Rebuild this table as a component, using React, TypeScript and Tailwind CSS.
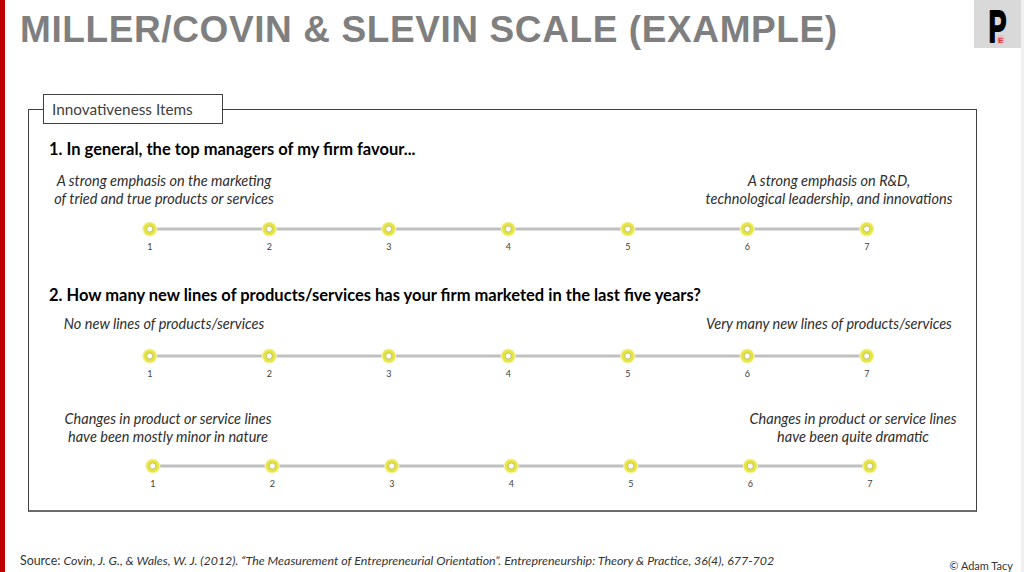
import React from "react";

const STEP = 119.5;

function Scale({ offset }: { offset: number }) {
  const w = STEP * 7;
  const centers = Array.from({ length: 7 }, (_, i) => STEP / 2 + i * STEP);
  return (
    <div className="flex flex-col" style={{ marginLeft: offset }}>
      <svg width={w} height={16} viewBox={`0 0 ${w} 16`} className="block">
        <line x1={centers[0]} y1={8} x2={centers[6]} y2={8} stroke="#c0c0c0" strokeWidth={3} />
        {centers.map((cx, i) => (
          <g key={i}>
            <circle cx={cx} cy={8} r={7.6} fill="#f5f3a8" />
            <circle cx={cx} cy={8} r={6.3} fill="#e6e440" />
            <circle cx={cx} cy={8} r={3.1} fill="#ffffff" stroke="#b5b35a" strokeWidth={0.8} />
          </g>
        ))}
      </svg>
      <div className="grid grid-cols-7 mt-[4px] text-center text-[9px] leading-[12px] text-[#404040]" style={{ width: w }}>
        {["1", "2", "3", "4", "5", "6", "7"].map((n) => (
          <span key={n}>{n}</span>
        ))}
      </div>
    </div>
  );
}

function Logo() {
  return (
    <div className="w-[47px] h-[48px] bg-[#d9d9d9]">
      <svg width={47} height={48} viewBox="0 0 47 48" className="block">
        <defs>
          <filter id="glow" x="-50%" y="-50%" width="200%" height="200%">
            <feGaussianBlur stdDeviation="1" />
          </filter>
        </defs>
        <text
          x={14.5}
          y={42}
          fontFamily="Liberation Sans, Arial, sans-serif"
          fontWeight={700}
          fontSize={45}
          textLength={18}
          lengthAdjust="spacingAndGlyphs"
          fill="#000000"
          stroke="#000000"
          strokeWidth={1.8}
          strokeLinejoin="round"
        >
          P
        </text>
        <circle cx={26.5} cy={39.5} r={3.5} fill="#f4a0a8" filter="url(#glow)" />
        <text
          x={24}
          y={43}
          fontFamily="Liberation Sans, Arial, sans-serif"
          fontWeight={700}
          fontSize={8}
          fill="#d63a48"
        >
          E
        </text>
      </svg>
    </div>
  );
}

export default function App() {
  return (
    <div className="w-[1024px] h-[572px] flex bg-white overflow-hidden font-['Lato',sans-serif]">
      <div className="w-[5px] h-full bg-[#c00000]" />
      <div className="flex-1 flex flex-col">
        <div className="flex items-start justify-between">
          <h1 className="pl-[15px] pt-[11px] font-['Liberation_Sans',Arial,sans-serif] font-bold text-[37px] leading-none tracking-[0.6px] text-[#7f7f7f]">
            MILLER/COVIN &amp; SLEVIN SCALE (EXAMPLE)
          </h1>
          <Logo />
        </div>

        <div className="relative ml-[23px] mt-[61px] w-[949px] h-[403px] border border-[#404040] border-b-2 border-b-[#6a6a6a] flex flex-col">
          <div className="absolute left-[14px] top-[-16px] w-[180px] h-[30px] bg-white border border-[#404040] flex items-center pl-[8px] text-[15.3px] text-[#404040]">
            Innovativeness Items
          </div>

          <div className="mt-[29px] pl-[20px] text-[16.5px] leading-[20px] font-bold text-black">
            1. In general, the top managers of my firm favour...
          </div>
          <div className="mt-[13px] flex justify-between italic text-[14.5px] leading-[17.5px] text-[#2e2e2e]">
            <div className="ml-[0px] w-[270px] text-center">
              A strong emphasis on the marketing
              <br />
              of tried and true products or services
            </div>
            <div className="mr-[12px] w-[270px] text-center">
              A strong emphasis on R&amp;D,
              <br />
              technological leadership, and innovations
            </div>
          </div>
          <div className="mt-[14px]">
            <Scale offset={61} />
          </div>

          <div className="mt-[32px] pl-[20px] text-[16.5px] leading-[20px] font-bold text-black">
            2. How many new lines of products/services has your firm marketed in the last five years?
          </div>
          <div className="mt-[10px] flex justify-between italic text-[14.5px] leading-[17.5px] text-[#2e2e2e]">
            <div className="ml-[0px] w-[270px] text-center">No new lines of products/services</div>
            <div className="mr-[12px] w-[270px] text-center">Very many new lines of products/services</div>
          </div>
          <div className="mt-[15px]">
            <Scale offset={61} />
          </div>

          <div className="mt-[30px] flex justify-between italic text-[14.5px] leading-[18.5px] text-[#2e2e2e]">
            <div className="ml-[4px] w-[270px] text-center">
              Changes in product or service lines
              <br />
              have been mostly minor in nature
            </div>
            <div className="mr-[-12px] w-[270px] text-center">
              Changes in product or service lines
              <br />
              have been quite dramatic
            </div>
          </div>
          <div className="mt-[11px]">
            <Scale offset={64} />
          </div>
        </div>

        <div className="mt-[42px] flex items-end justify-between pl-[15px] pr-[8px] text-[#333333]">
          <div className="text-[12.4px] leading-[14px]">
            Source: <i>Covin, J. G., &amp; Wales, W. J. (2012). “The Measurement of Entrepreneurial Orientation”. Entrepreneurship: Theory &amp; Practice, 36(4), 677-702</i>
          </div>
          <div className="text-[11px] leading-[13px] mb-[-4px]">© Adam Tacy</div>
        </div>
      </div>
      <div className="w-[3px] h-full bg-[#f0f0f0]" />
    </div>
  );
}
